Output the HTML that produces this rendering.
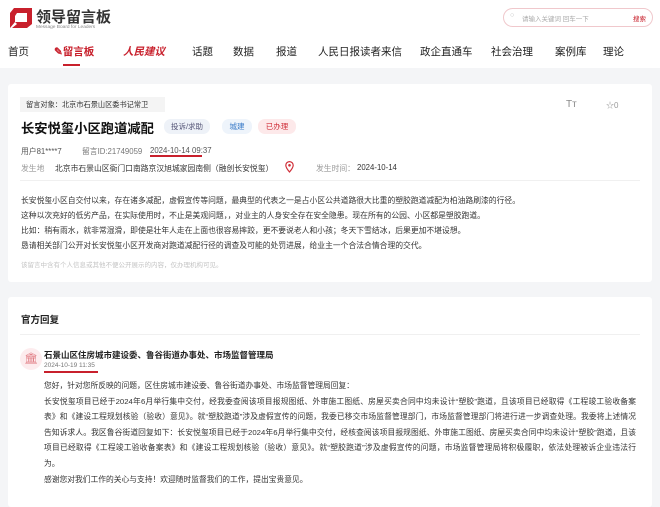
<!DOCTYPE html>
<html><head><meta charset="utf-8"><style>
*{margin:0;padding:0;box-sizing:border-box}
body{width:660px;height:501px;overflow:hidden;background:#f4f5f7;font-family:"Liberation Sans","Noto Sans CJK SC",sans-serif;color:#222;position:relative}
.a{position:absolute;white-space:nowrap}
#hdr{position:absolute;left:0;top:0;width:660px;height:68px;background:#fff}
.nav{font-size:10.5px;top:44px;color:#222}
.card{position:absolute;left:8px;width:644px;background:#fff;border-radius:3px}
.p{font-size:7.8px;color:#333;line-height:15px}
.r{position:absolute;left:44px;width:592px;font-size:7.75px;line-height:15.6px;color:#333}
.r div{white-space:nowrap;height:15.6px}
.r .j{text-align:justify;text-align-last:justify;white-space:normal;overflow:hidden}
</style></head><body>
<div id="hdr">
<svg class="a" style="left:8px;top:7px" width="25" height="22" viewBox="0 0 25 22"><path d="M6 1 H24 V17 L19 21 H2 V6 Z" fill="#c8202c"/><path d="M9 6 H19 V15 H7 V9 Z" fill="#fff"/><path d="M2 21 L7 15 L9 17 L4 21Z" fill="#fff"/></svg>
<div class="a" style="left:36px;top:6px;font-size:15px;font-weight:bold;color:#333">领导留言板</div>
<div class="a" style="left:36px;top:25px;font-size:4.8px;color:#888">Message Board for Leaders</div>
<div class="a" style="left:503px;top:8px;width:150px;height:19px;border:1px solid #f0c8cc;border-radius:10px"></div>
<div class="a" style="left:510px;top:12px;font-size:7px;color:#bbb">○</div>
<div class="a" style="left:522px;top:13px;font-size:6.5px;color:#aaa">请输入关键词 回车一下</div>
<div class="a" style="left:633px;top:13px;font-size:6.5px;color:#c8202c">搜索</div>
<div class="a nav" style="left:8px">首页</div>
<div class="a nav" style="left:54px;color:#c8202c;font-weight:bold">✎留言板</div>
<div class="a" style="left:63px;top:64px;width:17px;height:2px;background:#c8202c"></div>
<div class="a nav" style="left:123px;color:#c8202c;font-style:italic;font-weight:bold">人民建议</div>
<div class="a nav" style="left:192px">话题</div>
<div class="a nav" style="left:233px">数据</div>
<div class="a nav" style="left:276px">报道</div>
<div class="a nav" style="left:318px">人民日报读者来信</div>
<div class="a nav" style="left:420px">政企直通车</div>
<div class="a nav" style="left:491px">社会治理</div>
<div class="a nav" style="left:555px">案例库</div>
<div class="a nav" style="left:603px">理论</div>
</div>

<div class="card" style="top:84px;height:198px"></div>
<div class="a" style="left:20px;top:97px;width:145px;height:15px;background:#f4f4f4;font-size:7.2px;line-height:15px;padding-left:6px;color:#333">留言对象：北京市石景山区委书记常卫</div>
<div class="a" style="left:566px;top:99px;font-size:10px;color:#888">Tт</div>
<div class="a" style="left:606px;top:100px;font-size:8px;color:#999">☆0</div>
<div class="a" style="left:21px;top:118px;font-size:13.3px;font-weight:bold;color:#111">长安悦玺小区跑道减配</div>
<div class="a" style="left:164px;top:119px;width:46px;height:15px;background:#eef2f8;border-radius:7px;font-size:7.5px;line-height:15px;text-align:center;color:#557">投诉/求助</div>
<div class="a" style="left:222px;top:119px;width:30px;height:15px;background:#eef4fb;border-radius:7px;font-size:7.5px;line-height:15px;text-align:center;color:#3a7bc8">城建</div>
<div class="a" style="left:258px;top:119px;width:38px;height:15px;background:#fde9ea;border-radius:7px;font-size:7.5px;line-height:15px;text-align:center;color:#d0303a">已办理</div>
<div class="a" style="left:21px;top:146px;font-size:7.8px;color:#555">用户81****7</div>
<div class="a" style="left:82px;top:146px;font-size:7.8px;color:#777">留言ID:21749059</div>
<div class="a" style="left:150px;top:146px;font-size:7.8px;color:#555">2024-10-14 09:37</div>
<div class="a" style="left:150px;top:155px;width:52px;height:2px;background:#c8202c"></div>
<div class="a" style="left:21px;top:163px;font-size:7.8px;color:#999">发生地</div>
<div class="a" style="left:55px;top:163px;font-size:7.8px;color:#333">北京市石景山区衙门口南路京汉旭城家园南侧（融创长安悦玺）</div>
<svg class="a" style="left:285px;top:161px" width="9" height="12" viewBox="0 0 9 12"><path d="M4.5 11 C1 7 .8 5.5 .8 4.3 A3.7 3.7 0 0 1 8.2 4.3 C8.2 5.5 8 7 4.5 11Z" fill="none" stroke="#d0303a" stroke-width="1.2"/><circle cx="4.5" cy="4.3" r="1.3" fill="#d0303a"/></svg>
<div class="a" style="left:316px;top:163px;font-size:7.8px;color:#999">发生时间：</div>
<div class="a" style="left:357px;top:163px;font-size:7.8px;color:#333">2024-10-14</div>
<div class="a" style="left:20px;top:180px;width:620px;height:1px;background:#f0f0f0"></div>
<div class="a p" style="left:21px;top:193px">长安悦玺小区自交付以来，存在诸多减配，虚假宣传等问题，最典型的代表之一是占小区公共道路很大比重的塑胶跑道减配为柏油路刷漆的行径。<br>这种以次充好的低劣产品，在实际使用时，不止是美观问题，，对业主的人身安全存在安全隐患。现在所有的公园、小区都是塑胶跑道。<br>比如：稍有雨水，就非常湿滑，即使是壮年人走在上面也很容易摔跤，更不要说老人和小孩；冬天下雪结冰，后果更加不堪设想。<br>恳请相关部门公开对长安悦玺小区开发商对跑道减配行径的调查及可能的处罚进展，给业主一个合法合情合理的交代。</div>
<div class="a" style="left:21px;top:259px;font-size:6.5px;color:#c4c4c4">该留言中含有个人信息或其他不便公开展示的内容，仅办理机构可见。</div>

<div class="card" style="top:297px;height:210px"></div>
<div class="a" style="left:21px;top:312px;font-size:9.5px;font-weight:bold;color:#222">官方回复</div>
<div class="a" style="left:20px;top:334px;width:620px;height:1px;background:#f0f0f0"></div>
<div class="a" style="left:20px;top:348px;width:22px;height:22px;border-radius:11px;background:#fdecee;color:#e07a82;font-size:11px;line-height:22px;text-align:center">🏛</div>
<div class="a" style="left:44px;top:349px;font-size:8.5px;font-weight:bold;color:#222">石景山区住房城市建设委、鲁谷街道办事处、市场监督管理局</div>
<div class="a" style="left:44px;top:362px;font-size:6.5px;color:#777">2024-10-19 11:35</div>
<div class="a" style="left:44px;top:371px;width:54px;height:2px;background:#c8202c"></div>
<div class="r" style="top:378px">
<div>您好，针对您所反映的问题，区住房城市建设委、鲁谷街道办事处、市场监督管理局回复：</div>
<div class="j">长安悦玺项目已经于2024年6月举行集中交付，经我委查阅该项目报规图纸、外审施工图纸、房屋买卖合同中均未设计“塑胶”跑道，且该项目已经取得《工程竣工验收备案</div>
<div class="j">表》和《建设工程规划核验（验收）意见》。就“塑胶跑道”涉及虚假宣传的问题，我委已移交市场监督管理部门，市场监督管理部门将进行进一步调查处理。我委将上述情况</div>
<div class="j">告知诉求人。我区鲁谷街道回复如下：长安悦玺项目已经于2024年6月举行集中交付，经核查阅该项目报规图纸、外审施工图纸、房屋买卖合同中均未设计“塑胶”跑道，且该</div>
<div class="j">项目已经取得《工程竣工验收备案表》和《建设工程规划核验（验收）意见》。就“塑胶跑道”涉及虚假宣传的问题，市场监督管理局将积极履职，依法处理被诉企业违法行</div>
<div>为。</div>
<div>感谢您对我们工作的关心与支持！欢迎随时监督我们的工作，提出宝贵意见。</div>
</div>
</body></html>
